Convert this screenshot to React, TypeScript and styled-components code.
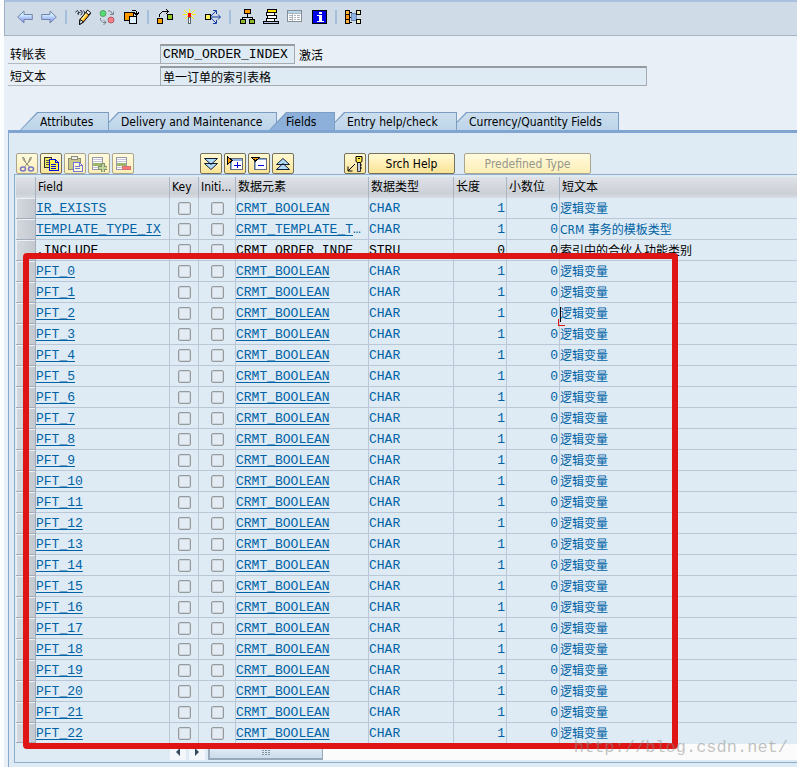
import React from "react";
import styled, { createGlobalStyle, css } from "styled-components";

const ui = `"DejaVu Sans Condensed", "Noto Sans CJK SC", sans-serif`;
const mono = `"Liberation Mono", "Noto Sans CJK SC", monospace`;

const GlobalStyle = createGlobalStyle`
  * { box-sizing: border-box; }
  body { margin: 0; background: #fcfdff; font-family: ${ui}; font-size: 12px; color: #000; }
  button, input { font-family: inherit; font-size: inherit; color: inherit; }
`;

const Page = styled.main`
  position: relative;
  display: flex;
  flex-direction: column;
  min-height: 100vh;
  margin-left: 4px;
  background: #e8eff6;
  overflow: hidden;
`;

const Toolbar = styled.div`
  display: flex;
  align-items: center;
  height: 36px;
  padding: 0 0 3px 8px;
  border-top: 2px solid #a9c1dc;
  border-left: 1px solid #9db0c6;
  border-bottom: 1px solid #a3b4c6;
  background: #cfdbe7;
`;

const ToolButton = styled.button`
  display: grid;
  place-items: center;
  width: 24px;
  height: 24px;
  padding: 0;
  border: 0;
  background: none;
`;

const Separator = styled.span`
  width: 2px;
  height: 14px;
  margin: 0 4px;
  background: #a4bedb;
`;

const Form = styled.form`
  display: flex;
  flex-direction: column;
  gap: 2px;
  padding: 8px 0 26px 4px;
`;

const FormRow = styled.div`
  display: flex;
  align-items: center;
  height: 20px;
`;

const Label = styled.label`
  flex: 0 0 152px;
  height: 20px;
  padding-left: 2px;
  border-bottom: 1px solid #b3b9c0;
  line-height: 22px;
`;

const TextField = styled.input<{ $width: number; $text?: boolean }>`
  width: ${(p) => p.$width}px;
  height: 20px;
  padding: 0 2px;
  border: 1px solid #a6abb0;
  border-top: 2px solid #969b9f;
  border-radius: 0;
  background: #deeaf4;
  font-family: ${(p) => (p.$text ? ui : mono)};
  font-size: ${(p) => (p.$text ? 12 : 13)}px;
  outline: 0;
`;

const Status = styled.span`
  padding-left: 4px;
`;

const TabStrip = styled.div`
  display: flex;
  height: 18px;
  padding-left: 16px;
`;

const Tab = styled.button<{ $width: number; $order: number; $active?: boolean }>`
  position: relative;
  z-index: ${(p) => (p.$active ? 9 : p.$order)};
  flex: 0 0 ${(p) => p.$width}px;
  height: 18px;
  margin-right: -8px;
  padding: 0 0 0 ${(p) => (p.$active ? 17 : 20)}px;
  border: 0;
  background: none;
  text-align: left;
  line-height: 20px;
  white-space: nowrap;

  &::before,
  &::after {
    content: "";
    position: absolute;
    z-index: -2;
    inset: 0;
    background: #7b9dc4;
    clip-path: polygon(0 100%, 17px 0, 100% 0, 100% 100%);
  }
  &::after {
    z-index: -1;
    inset: 1px 1px 0 1px;
    background: ${(p) => (p.$active ? "#8cb0da" : "linear-gradient(#cbdeee, #bdd4e9)")};
  }
`;

const Panel = styled.section`
  flex: 1;
  margin-left: 4px;
  border-top: 3px solid #7fa5d0;
  border-left: 1px solid #88a9cc;
  background: #deeaf4;
`;

const Actions = styled.div`
  display: flex;
  height: 41px;
  padding: 20px 0 0 7px;
  gap: 2px;
`;

const ActionButton = styled.button<{ $wide?: number; $gap?: number }>`
  display: grid;
  place-items: center;
  width: ${(p) => p.$wide ?? 22}px;
  height: 21px;
  margin-left: ${(p) => p.$gap ?? 0}px;
  padding: 0;
  border: 1px solid #77715c;
  border-radius: 2px;
  background: linear-gradient(#fff9d3, #fff0b8 45%, #f8e294);
  line-height: 20px;
  &:disabled {
    border-color: #aaa58f;
    color: #96978d;
    background: linear-gradient(#fffbe0, #fff5cb 45%, #fbeeb6);
  }
`;

const Frame = styled.div`
  margin-left: 5px;
  padding: 2px 0 2px 1px;
  border: solid #8fadcc;
  border-width: 1px 0 1px 1px;
`;

const Grid = styled.table`
  width: 100%;
  table-layout: fixed;
  border-collapse: separate;
  border-spacing: 0;
`;

const HeadCell = styled.th`
  height: 21px;
  padding: 0 0 0 2px;
  border-right: 1px solid #a9b5c2;
  background: linear-gradient(#dfe3e8, #cbcfd6 80%, #d9dee5);
  text-align: left;
  font-weight: 400;
  line-height: 21px;
  white-space: nowrap;
  overflow: hidden;
  &:last-child { border-right: 0; }
`;

const Row = styled.tr<{ $structure?: boolean }>`
  color: ${(p) => (p.$structure ? "#000" : "#0063a5")};
`;

const Cell = styled.td<{ $align?: string; $text?: boolean; $check?: boolean }>`
  height: 21px;
  padding: 2px 0 0;
  border-right: 1px solid #b9c7d6;
  border-bottom: 1px solid #b9c7d6;
  font-family: ${mono};
  font-size: 13px;
  line-height: 18px;
  text-align: ${(p) => p.$align ?? "left"};
  white-space: nowrap;
  ${(p) => p.$check && "padding: 0;"}
  ${(p) => p.$align === "right" && "padding-right: 1px;"}
  ${(p) =>
    p.$text &&
    css`
      border-right: 0;
      font-family: ${ui};
      font-size: 12px;
    `}
  tr:last-child > & {
    height: 20px;
    border-bottom: 0;
  }
`;

const Selector = styled.td`
  padding: 0;
  border: 1px solid #a3adb9;
  border-width: 0 1px 1px 0;
  box-shadow: inset 1px 1px #edf1f5;
  background: linear-gradient(90deg, #d5d9df, #c4c9d1);
`;

const Check = styled.input`
  display: block;
  appearance: none;
  width: 13px;
  height: 13px;
  margin: 0 auto;
  border: 1px solid #969b9f;
  border-radius: 2px;
  background: #e3ecf4;
  box-shadow: inset 0 0 0 1px #cfd5d9;
`;

const Link = styled.a`
  color: inherit;
  text-decoration: underline;
  text-underline-offset: 2px;
  text-decoration-skip-ink: none;
`;

const Scroll = styled.div`
  display: flex;
  height: 16px;
  margin: 1px 0 0 154px;
`;

const ScrollArrow = styled.button`
  display: grid;
  place-items: center;
  width: 16px;
  height: 16px;
  margin-right: 3px;
  padding: 0;
  border: 0;
  background: #f3f7fb;
`;

const Track = styled.div`
  flex: 1;
  background: #fbfbfb;
`;

const Thumb = styled.div`
  display: grid;
  place-items: center;
  width: 115px;
  height: 16px;
  border: 1px solid #98a9bb;
  border-width: 1px 1px 2px 2px;
  background: linear-gradient(#e8f0f7, #cbdceb);
`;

const Highlight = styled.div`
  position: absolute;
  z-index: 20;
  top: 253px;
  left: 19px;
  width: 655px;
  height: 496px;
  border: 6px solid #df1515;
  border-radius: 4px;
  pointer-events: none;
`;

const Caret = styled.span`
  position: relative;
  &::before {
    content: "";
    position: absolute;
    top: 0;
    left: 0;
    width: 1px;
    height: 15px;
    background: #000;
  }
  &::after {
    content: "";
    position: absolute;
    top: 12px;
    left: -2px;
    width: 6px;
    height: 6px;
    border: solid #df1515;
    border-width: 0 0 1px 1px;
  }
`;

const Watermark = styled.div`
  position: absolute;
  z-index: 21;
  right: 9px;
  bottom: 8px;
  color: rgba(140, 140, 135, 0.5);
  font: 17px/22px "Liberation Mono", monospace;
`;

const Svg = ({ children, size = 16, smooth }: { children: React.ReactNode; size?: number; smooth?: boolean }) => (
  <svg width={size} height={size} viewBox={`0 0 ${size} ${size}`} shapeRendering={smooth ? "auto" : "crispEdges"} fill="none" aria-hidden="true">
    {children}
  </svg>
);

const Box = ({ x, y, w, h, f, s = "#000" }: { x: number; y: number; w: number; h: number; f: string; s?: string }) => (
  <>
    <rect x={x} y={y} width={w} height={h} fill={s} />
    <rect x={x + 1} y={y + 1} width={w - 2} height={h - 2} fill={f} />
  </>
);

const arrow = "M.7 8 7 2v3.5h8.3v5H7V14z";
const ArrowIcon = ({ right }: { right?: boolean }) => (
  <Svg smooth>
    <defs>
      <linearGradient id={right ? "ar" : "al"} x2="0" y2="1">
        <stop offset=".3" stopColor="#d0f0ff" />
        <stop offset="1" stopColor="#7d86f0" />
      </linearGradient>
    </defs>
    <path d={arrow} transform={right ? "matrix(-1 0 0 1 16 0)" : undefined} fill={`url(#${right ? "ar" : "al"})`} stroke="#7484ab" />
  </Svg>
);

const icons: Record<string, React.ReactNode> = {
  toggle: (
    <Svg smooth>
      <path d="M.5 3.500 2 1.500l1.500 1v3l-1.500-1M5 1.500l2 .5v3L5.500 6M3.500 3.500h2M8 1.500l1.500 1V5" stroke="#333c4d" />
      <path d="m5 10.500 7-8.500 3.500 2.500L8.500 13l-4 2.500z" fill="#ffad18" stroke="#000" />
      <path d="m6.500 11 6.500-8" stroke="#fff2a0" strokeWidth="1.500" />
      <path d="m11 3.500 1.500-2.500 3 2.500-1.500 2.500z" fill="#fff" stroke="#000" />
      <path d="m5 10.500 3.500 2.500-4 2.500z" fill="#e8f4ff" stroke="#000" />
    </Svg>
  ),
  activate: (
    <Svg smooth>
      <circle cx="4" cy="4.500" r="3" fill="#4fe070" stroke="#5d9c69" />
      <circle cx="12" cy="11" r="3" fill="#f58089" stroke="#ae5f67" />
      <path d="M9 2h2.500l2 3M11 5.500h3.500V2.500M1.500 9v2L4 13.500h3M4.500 11 7 13.500 4.500 16" stroke="#7b8288" />
    </Svg>
  ),
  other: (
    <Svg>
      <Box x={1} y={3} w={10} h={9} f="#f90" />
      <Box x={6} y={7} w={8} h={8} f="#dff1ff" />
      <path d="M8.500 1.500h4l1 1v3M11 3.500l2.500 2.500L16 3.500" stroke="#000" />
    </Svg>
  ),
  where: (
    <Svg>
      <Box x={0} y={9} w={6} h={6} f="#ffa000" />
      <Box x={10} y={5} w={6} h={6} f="#8ecb23" />
      <path d="M2.500 7.500v-2l3-3h5.500M9 0l2.500 2.500L9 5" stroke="#000" />
    </Svg>
  ),
  match: (
    <Svg>
      <path d="M8.500 0v4M3 1l4 4M14 1l-4 4M2 5.500h4M11 5.500h4M4 10l3-3M13 10l-3-3" stroke="#ffef00" />
      <rect x="7" y="4" width="3" height="4" fill="#f00" />
      <Box x={7} y={8} w={3} h={7} f="#fff" s="#59636f" />
    </Svg>
  ),
  spread: (
    <Svg smooth>
      <Box x={0} y={5} w={6} h={6} f="#fff35b" />
      <path d="M6 8h9M6 7l5-5M6 9l5 5M13 5.500 15.500 8 13 10.500M8 1.500h3.500V5M8 14.500h3.500V11" stroke="#153c9e" />
    </Svg>
  ),
  tree: (
    <Svg>
      <path d="M8.500 5v3M3.500 11V8h10v3" stroke="#000" />
      <Box x={5} y={0} w={7} h={5} f="#ff9500" />
      <Box x={1} y={10} w={6} h={5} f="#8bb829" />
      <Box x={10} y={10} w={6} h={5} f="#8bb829" />
    </Svg>
  ),
  stack: (
    <Svg>
      <Box x={4} y={0} w={10} h={4} f="#ffe000" />
      <Box x={3} y={3} w={9} h={4} f="#fff" />
      <Box x={4} y={6} w={10} h={4} f="#fff" />
      <Box x={3} y={9} w={9} h={4} f="#fff" />
      <Box x={0} y={12} w={16} h={3} f="#a9c5e7" />
    </Svg>
  ),
  table: (
    <Svg>
      <Box x={0} y={1} w={15} h={12} f="#fff" s="#858d94" />
      <rect x="1" y="2" width="13" height="2" fill="#b5d5eb" />
      <path d="M1 4.500h13M5.500 4v8M2 6.500h3M2 8.500h3M2 10.500h3M7 6.500h2M10 6.500h3M7 8.500h2M10 8.500h3M7 10.500h2M10 10.500h3" stroke="#aab4bd" />
    </Svg>
  ),
  info: (
    <Svg>
      <Box x={1} y={1} w={15} h={14} f="#0000e8" />
      <path d="M8 3h3v2H8zM6 6h5v6h2v1H6v-1h2V7H6z" fill="#fff" />
    </Svg>
  ),
  columns: (
    <Svg>
      <path d="M4 3h3M4 8h3M4 13h3M11 3h3M11 13h3" stroke="#000" />
      <Box x={0} y={1} w={5} h={5} f="#ffb33c" />
      <Box x={0} y={5} w={5} h={6} f="#ff9417" />
      <Box x={0} y={10} w={5} h={5} f="#ffb33c" />
      <Box x={6} y={4} w={6} h={8} f="#8db2e3" s="#6986af" />
      <Box x={11} y={1} w={5} h={5} f="#f5f0bb" />
      <Box x={11} y={10} w={5} h={5} f="#f5f0bb" />
    </Svg>
  ),
  cut: (
    <Svg smooth>
      <path d="m3.500 1 1 3 6 7M12.500 1l-1 3-6 7M4.500 1l2 5M11.500 1l-2 5" stroke="#8c8b79" />
      <ellipse cx="4" cy="13" rx="2.500" ry="2" stroke="#7775c8" strokeWidth="1.500" />
      <ellipse cx="12" cy="13" rx="2.500" ry="2" stroke="#7775c8" strokeWidth="1.500" />
    </Svg>
  ),
  copy: (
    <Svg>
      <Box x={1} y={1} w={8} h={11} f="#f2e85e" s="#333" />
      <path d="M3 4h3M3 6h3M3 8h3" stroke="#554" />
      <path d="M6.500 3.500h6l3 3v8h-9z" fill="#fff24e" stroke="#0011d4" />
      <path d="M12.500 3.500v3h3M8 8.500h5M8 10.500h5M8 12.500h5" stroke="#0011d4" />
    </Svg>
  ),
  paste: (
    <Svg>
      <Box x={1} y={2} w={13} h={12} f="#c9c88a" s="#8c8b75" />
      <Box x={4} y={0} w={7} h={4} f="#eee" s="#8c8b75" />
      <path d="M6.500 6.500h6l3 3v6h-9z" fill="#fffbd0" stroke="#7474df" />
      <path d="M12.500 6.500v3h3M8 10.500h5M8 12.500h5" stroke="#7474df" />
    </Svg>
  ),
  insert: (
    <Svg>
      <Box x={1} y={1} w={11} h={13} f="#fff" s="#9a99a8" />
      <path d="M2 3.500h9M2 5.500h9M2 11.500h9" stroke="#c7c4dc" />
      <rect x="2" y="7" width="9" height="3" fill="#9cb66b" />
      <path d="M10 7h3v3h3v3h-3v3h-3v-3H7v-3h3z" fill="#c1d49a" stroke="#83916c" />
    </Svg>
  ),
  remove: (
    <Svg>
      <Box x={1} y={1} w={11} h={13} f="#fff" s="#9a99a8" />
      <path d="M2 3.500h9M2 5.500h9M2 11.500h9" stroke="#c7c4dc" />
      <rect x="2" y="7" width="9" height="3" fill="#9cb66b" />
      <Box x={7} y={10} w={9} h={4} f="#ff7277" s="#d37375" />
    </Svg>
  ),
  down: (
    <Svg smooth>
      <path d="M1.500 2.500h13L8 8.500zM1.500 7.500h13L8 13.500z" fill="#b4dafa" stroke="#101c34" />
    </Svg>
  ),
  up: (
    <Svg smooth>
      <path d="M1.500 13.500h13L8 7.500zM1.500 8.500h13L8 2.500z" fill="#b4dafa" stroke="#101c34" />
    </Svg>
  ),
  expand: (
    <Svg>
      <Box x={3} y={2} w={13} h={12} f="#8caee0" s="#626c7c" />
      <rect x="5" y="5" width="10" height="8" fill="#fff" />
      <path d="M0 0v9l5-4.500z" fill="#f90" stroke="#000" />
      <path d="M10.500 6v6M7 9h7" stroke="#00d" />
    </Svg>
  ),
  collapse: (
    <Svg>
      <Box x={3} y={2} w={13} h={12} f="#8caee0" s="#626c7c" />
      <rect x="5" y="4" width="10" height="9" fill="#fff" />
      <path d="M0 1h9L4.500 5z" fill="#f90" stroke="#000" />
      <path d="M7 9h6" stroke="#00d" />
    </Svg>
  ),
  key: (
    <Svg smooth>
      <path d="M10.500 5.500h3v10h-3z" fill="#c7d0dc" stroke="#333" />
      <path d="M9 .500h6v5l-1.500 1h-3L9 5.500z" fill="#ffe640" stroke="#000" />
      <path d="M11 2.500h2" stroke="#000" />
      <path d="M13 9h2M13 12h2M8 8l-7 7M1 10.500V15h4.500" stroke="#000" />
    </Svg>
  ),
};

const toolGroups = [
  [["Back", <ArrowIcon key="b" />], ["Forward", <ArrowIcon key="f" right />]],
  [["Display/Change", icons.toggle], ["Active/Inactive", icons.activate], ["Other object", icons.other]],
  [["Check", icons.where], ["Activate", icons.match], ["Where-used list", icons.spread]],
  [["Hierarchy", icons.tree], ["Append structure", icons.stack], ["Contents", icons.table], ["Information", icons.info]],
  [["Graphic", icons.columns]],
] as [string, React.ReactNode][][];

const tabs = [
  { label: "Attributes", width: 89 },
  { label: "Delivery and Maintenance", width: 176 },
  { label: "Fields", width: 66 },
  { label: "Entry help/check", width: 130 },
  { label: "Currency/Quantity Fields", width: 170 },
];

interface Field {
  name: string;
  element: string;
  type: string;
  length: number;
  text: string;
  cut?: boolean;
  structure?: boolean;
  caret?: boolean;
}

const fields: Field[] = [
  { name: "IR_EXISTS", element: "CRMT_BOOLEAN", type: "CHAR", length: 1, text: "逻辑变量" },
  { name: "TEMPLATE_TYPE_IX", element: "CRMT_TEMPLATE_T", cut: true, type: "CHAR", length: 1, text: "CRM 事务的模板类型" },
  { name: ".INCLUDE", element: "CRMT_ORDER_INDE", cut: true, type: "STRU", length: 0, text: "索引中的合伙人功能类别", structure: true },
  ...Array.from({ length: 23 }, (_, i) => ({
    name: `PFT_${i}`,
    element: "CRMT_BOOLEAN",
    type: "CHAR",
    length: 1,
    text: "逻辑变量",
    caret: i === 2,
  })),
];

const headings = ["Field", "Key", "Initi...", "数据元素", "数据类型", "长度", "小数位", "短文本"];
const widths = [20, 134, 29, 37, 133, 85, 53, 53];

export default function App() {
  return (
    <>
      <GlobalStyle />
      <Page>
        <Toolbar role="toolbar">
          {toolGroups.map((group, i) => (
            <React.Fragment key={i}>
              {i > 0 && <Separator />}
              {group.map(([name, icon]) => (
                <ToolButton key={name} aria-label={name}>{icon}</ToolButton>
              ))}
            </React.Fragment>
          ))}
        </Toolbar>
        <Form>
          <FormRow>
            <Label htmlFor="table-name">转帐表</Label>
            <TextField id="table-name" $width={135} readOnly value="CRMD_ORDER_INDEX" />
            <Status>激活</Status>
          </FormRow>
          <FormRow>
            <Label htmlFor="short-text">短文本</Label>
            <TextField id="short-text" $width={487} $text readOnly value="单一订单的索引表格" />
          </FormRow>
        </Form>
        <TabStrip role="tablist">
          {tabs.map((t, i) => (
            <Tab key={t.label} role="tab" aria-selected={i === 2} $active={i === 2} $width={t.width} $order={tabs.length - i}>
              {t.label}
            </Tab>
          ))}
        </TabStrip>
        <Panel>
          <Actions>
            <ActionButton disabled aria-label="Cut">{icons.cut}</ActionButton>
            <ActionButton aria-label="Copy">{icons.copy}</ActionButton>
            <ActionButton disabled aria-label="Paste">{icons.paste}</ActionButton>
            <ActionButton disabled aria-label="Insert row">{icons.insert}</ActionButton>
            <ActionButton disabled aria-label="Delete row">{icons.remove}</ActionButton>
            <ActionButton $gap={64} aria-label="Expand all">{icons.down}</ActionButton>
            <ActionButton aria-label="Expand include">{icons.expand}</ActionButton>
            <ActionButton aria-label="Collapse include">{icons.collapse}</ActionButton>
            <ActionButton aria-label="Collapse all">{icons.up}</ActionButton>
            <ActionButton $gap={48} aria-label="Foreign keys">{icons.key}</ActionButton>
            <ActionButton $wide={87}>Srch Help</ActionButton>
            <ActionButton $wide={127} $gap={7} disabled>Predefined Type</ActionButton>
          </Actions>
          <Frame>
            <Grid>
              <colgroup>
                {widths.map((w, i) => <col key={i} width={w} />)}
                <col />
              </colgroup>
              <thead>
                <tr>
                  <HeadCell aria-label="Select" />
                  {headings.map((h) => <HeadCell key={h} scope="col">{h}</HeadCell>)}
                </tr>
              </thead>
              <tbody>
                {fields.map((f) => (
                  <Row key={f.name} $structure={f.structure}>
                    <Selector />
                    <Cell>{f.structure ? f.name : <Link href="#">{f.name}</Link>}</Cell>
                    <Cell $check><Check type="checkbox" aria-label={`${f.name} key`} /></Cell>
                    <Cell $check><Check type="checkbox" aria-label={`${f.name} initial`} /></Cell>
                    <Cell>
                      {f.structure ? f.element : <Link href="#">{f.element}</Link>}
                      {f.cut && !f.structure && "…"}
                    </Cell>
                    <Cell>{f.type}</Cell>
                    <Cell $align="right">{f.length}</Cell>
                    <Cell $align="right">0</Cell>
                    <Cell $text>{f.caret ? <Caret>{f.text}</Caret> : f.text}</Cell>
                  </Row>
                ))}
              </tbody>
            </Grid>
            <Scroll>
              <ScrollArrow aria-label="Scroll left">
                <Svg smooth><path d="M10 4v8L6 8z" fill="#34495e" /></Svg>
              </ScrollArrow>
              <ScrollArrow aria-label="Scroll right">
                <Svg smooth><path d="M6 4v8l4-4z" fill="#34495e" /></Svg>
              </ScrollArrow>
              <Track>
                <Thumb>
                  <Svg><path d="M4 5.500h8M4 7.500h8M4 9.500h8" stroke="#8295a8" strokeDasharray="2 1" /></Svg>
                </Thumb>
              </Track>
            </Scroll>
          </Frame>
        </Panel>
        <Highlight />
        <Watermark>http://blog.csdn.net/</Watermark>
      </Page>
    </>
  );
}
